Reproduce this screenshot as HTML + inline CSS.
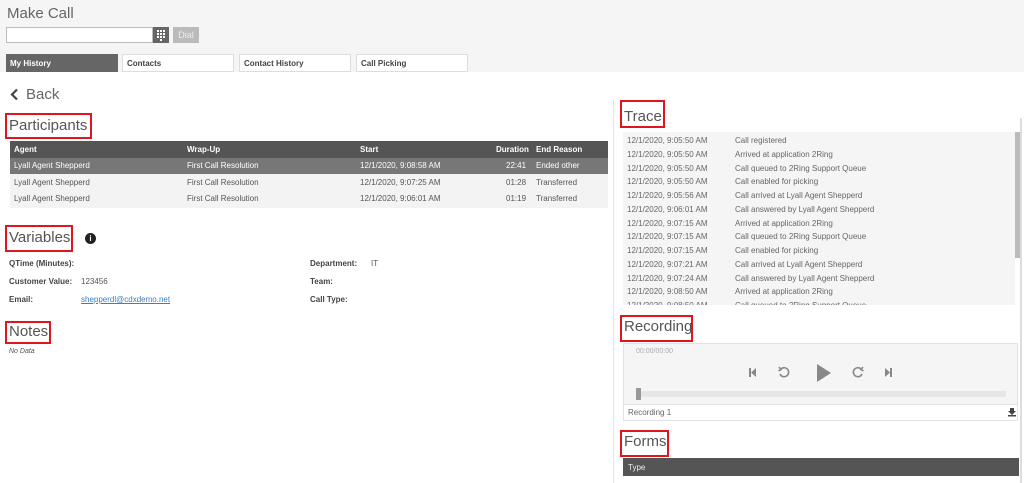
<!DOCTYPE html>
<html><head><meta charset="utf-8"><style>
*{margin:0;padding:0;box-sizing:border-box}
body{width:1024px;height:483px;overflow:hidden;background:#fff;font-family:"Liberation Sans",sans-serif;position:relative;color:#555}
.a{position:absolute;white-space:nowrap}
.red{position:absolute;border:2px solid #e0161e}
.h{font-size:15px;color:#555}
.s{font-size:8px}
.b{font-weight:bold;color:#444}
</style></head><body>
<div class="a" style="left:0;top:0;width:1024px;height:72px;background:#f5f5f5"></div>
<div class="a" style="left:7px;top:5px;font-size:15px;color:#666">Make Call</div>
<div class="a" style="left:6px;top:27px;width:147px;height:16px;background:#fff;border:1px solid #bbb"></div>
<div class="a" style="left:153px;top:27px;width:16px;height:16px;background:#666"></div>
<svg class="a" style="left:156px;top:29px" width="10" height="12" viewBox="0 0 10 12"><g fill="#fff"><rect x="1" y="1" width="2" height="2"/><rect x="4" y="1" width="2" height="2"/><rect x="7" y="1" width="2" height="2"/><rect x="1" y="4" width="2" height="2"/><rect x="4" y="4" width="2" height="2"/><rect x="7" y="4" width="2" height="2"/><rect x="1" y="7" width="2" height="2"/><rect x="4" y="7" width="2" height="2"/><rect x="7" y="7" width="2" height="2"/><rect x="4" y="10" width="2" height="2"/></g></svg>
<div class="a" style="left:173px;top:27px;width:26px;height:16px;background:#bbb;color:#eee;font-size:9px;line-height:16px;text-align:center">Dial</div>
<div class="a s b" style="left:6px;top:54px;width:112px;height:18px;background:#666;color:#fff;padding:5px 4px">My History</div>
<div class="a s b" style="left:122px;top:54px;width:112px;height:18px;background:#fff;border:1px solid #ddd;padding:4px 4px">Contacts</div>
<div class="a s b" style="left:239px;top:54px;width:112px;height:18px;background:#fff;border:1px solid #ddd;padding:4px 4px">Contact History</div>
<div class="a s b" style="left:356px;top:54px;width:112px;height:18px;background:#fff;border:1px solid #ddd;padding:4px 4px">Call Picking</div>

<svg class="a" style="left:9px;top:88px" width="10" height="13" viewBox="0 0 10 13"><path d="M8 1.5 3 6.5 8 11.5" stroke="#444" stroke-width="2.2" fill="none"/></svg>
<div class="a" style="left:26px;top:86px;font-size:15px;color:#666">Back</div>

<div class="red" style="left:5px;top:113px;width:87px;height:26px"></div>
<div class="a h" style="left:9px;top:117px">Participants</div>
<div class="a" style="left:10px;top:141px;width:598px;height:67px;background:#f3f3f3"></div>
<div class="a" style="left:10px;top:141px;width:598px;height:17px;background:#555"></div>
<div class="a" style="left:10px;top:158px;width:598px;height:16px;background:#777"></div>
<div class="a s b" style="left:14px;top:145px;color:#fff">Agent</div>
<div class="a s b" style="left:187px;top:145px;color:#fff">Wrap-Up</div>
<div class="a s b" style="left:360px;top:145px;color:#fff">Start</div>
<div class="a s b" style="left:496px;top:145px;color:#fff">Duration</div>
<div class="a s b" style="left:536px;top:145px;color:#fff">End Reason</div>
<div class="a s" style="left:14px;top:161px;color:#fff">Lyall Agent Shepperd</div>
<div class="a s" style="left:187px;top:161px;color:#fff">First Call Resolution</div>
<div class="a s" style="left:360px;top:161px;color:#fff">12/1/2020, 9:08:58 AM</div>
<div class="a s" style="left:506px;top:161px;color:#fff">22:41</div>
<div class="a s" style="left:536px;top:161px;color:#fff">Ended other</div>
<div class="a s" style="left:14px;top:178px">Lyall Agent Shepperd</div>
<div class="a s" style="left:187px;top:178px">First Call Resolution</div>
<div class="a s" style="left:360px;top:178px">12/1/2020, 9:07:25 AM</div>
<div class="a s" style="left:506px;top:178px">01:28</div>
<div class="a s" style="left:536px;top:178px">Transferred</div>
<div class="a s" style="left:14px;top:194px">Lyall Agent Shepperd</div>
<div class="a s" style="left:187px;top:194px">First Call Resolution</div>
<div class="a s" style="left:360px;top:194px">12/1/2020, 9:06:01 AM</div>
<div class="a s" style="left:506px;top:194px">01:19</div>
<div class="a s" style="left:536px;top:194px">Transferred</div>

<div class="red" style="left:5px;top:225px;width:68px;height:27px"></div>
<div class="a h" style="left:9px;top:229px">Variables</div>
<div class="a" style="left:85px;top:233px;width:11px;height:11px;border-radius:50%;background:#222;color:#fff;font-size:8px;font-weight:bold;text-align:center;line-height:11px">i</div>
<div class="a s b" style="left:9px;top:259px">QTime (Minutes):</div>
<div class="a s b" style="left:9px;top:277px">Customer Value:</div>
<div class="a s" style="left:81px;top:277px">123456</div>
<div class="a s b" style="left:9px;top:295px">Email:</div>
<div class="a s" style="left:81px;top:295px;color:#3a7fc0;text-decoration:underline">shepperdl@cdxdemo.net</div>
<div class="a s b" style="left:310px;top:259px">Department:</div>
<div class="a s" style="left:371px;top:259px">IT</div>
<div class="a s b" style="left:310px;top:277px">Team:</div>
<div class="a s b" style="left:310px;top:295px">Call Type:</div>

<div class="red" style="left:5px;top:321px;width:46px;height:23px"></div>
<div class="a h" style="left:9px;top:323px">Notes</div>
<div class="a" style="left:9px;top:348px;font-size:7px;font-style:italic">No Data</div>

<div class="a" style="left:613px;top:100px;width:1px;height:383px;background:#e4e4e4"></div>
<div class="red" style="left:620px;top:100px;width:45px;height:28px"></div>
<div class="a h" style="left:624px;top:108px">Trace</div>
<div class="a" style="left:1020px;top:118px;width:2px;height:365px;background:#ddd"></div>
<div class="a" style="left:623px;top:132px;width:392px;height:173px;background:#f5f5f5;overflow:hidden">
<div style="position:absolute;left:4px;top:2px;font-size:8px;line-height:13.75px;color:#666">12/1/2020, 9:05:50 AM<br>12/1/2020, 9:05:50 AM<br>12/1/2020, 9:05:50 AM<br>12/1/2020, 9:05:50 AM<br>12/1/2020, 9:05:56 AM<br>12/1/2020, 9:06:01 AM<br>12/1/2020, 9:07:15 AM<br>12/1/2020, 9:07:15 AM<br>12/1/2020, 9:07:15 AM<br>12/1/2020, 9:07:21 AM<br>12/1/2020, 9:07:24 AM<br>12/1/2020, 9:08:50 AM<br>12/1/2020, 9:08:50 AM</div>
<div style="position:absolute;left:112px;top:2px;font-size:8px;line-height:13.75px;color:#666">Call registered<br>Arrived at application 2Ring<br>Call queued to 2Ring Support Queue<br>Call enabled for picking<br>Call arrived at Lyall Agent Shepperd<br>Call answered by Lyall Agent Shepperd<br>Arrived at application 2Ring<br>Call queued to 2Ring Support Queue<br>Call enabled for picking<br>Call arrived at Lyall Agent Shepperd<br>Call answered by Lyall Agent Shepperd<br>Arrived at application 2Ring<br>Call queued to 2Ring Support Queue</div>
</div>
<div class="a" style="left:1015px;top:132px;width:5px;height:126px;background:#bbb"></div>

<div class="red" style="left:620px;top:315px;width:73px;height:27px"></div>
<div class="a h" style="left:624px;top:318px">Recording</div>
<div class="a" style="left:623px;top:343px;width:395px;height:78px;border:1px solid #e2e2e2;background:#f5f5f5"></div>
<div class="a" style="left:624px;top:404px;width:393px;height:16px;background:#fff;border-top:1px solid #e2e2e2"></div>
<div class="a" style="left:636px;top:348px;font-size:7px;color:#aaa">00:00/00:00</div>
<svg class="a" style="left:745px;top:362px" width="150" height="22" viewBox="0 0 150 22">
<g fill="#888"><rect x="4" y="6" width="2" height="9"/><path d="M11 6v9l-5-4.5z"/>
<path d="M72 2v18l14-9z"/>
<path d="M140 6v9l5-4.5z"/><rect x="145" y="6" width="2" height="9"/></g>
<g stroke="#888" stroke-width="1.6" fill="none"><path d="M36 7a4.5 4.5 0 1 1-1 5"/><path d="M34 5l2 2.5-2.5 1.5"/>
<path d="M116 7a4.5 4.5 0 1 0 1 5"/><path d="M118 5l-2 2.5 2.5 1.5"/></g>
</svg>
<div class="a" style="left:636px;top:391px;width:370px;height:6px;background:#e6e6e6"></div>
<div class="a" style="left:636px;top:388px;width:5px;height:12px;background:#999"></div>
<div class="a" style="left:628px;top:408px;font-size:8px;color:#666">Recording 1</div>
<svg class="a" style="left:1007px;top:407px" width="10" height="10" viewBox="0 0 10 10"><path d="M3 1h4v3h2L5 8 1 4h2z M1 8h8v1.5H1z" fill="#444"/></svg>

<div class="red" style="left:620px;top:430px;width:49px;height:27px"></div>
<div class="a h" style="left:624px;top:433px">Forms</div>
<div class="a" style="left:623px;top:458px;width:396px;height:18px;background:#555"></div>
<div class="a s" style="left:628px;top:463px;color:#eee">Type</div>
</body></html>
